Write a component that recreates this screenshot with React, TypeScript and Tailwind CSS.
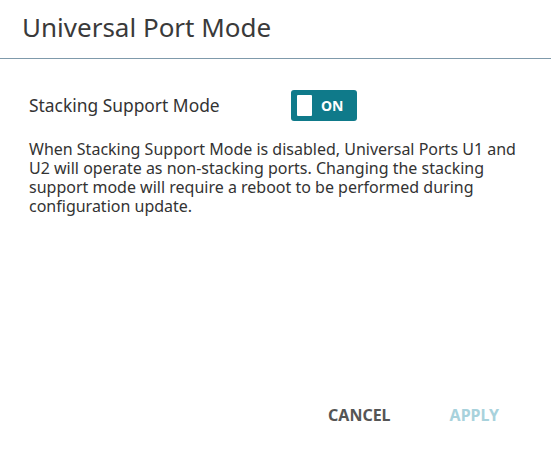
export default function App() {
  return (
    <div className="flex h-[455px] w-[551px] flex-col bg-white font-['Noto_Sans',sans-serif] text-[#333]">
      {/* Header */}
      <div className="flex h-[59px] items-center border-b border-[#7f9aab] px-[22px] pb-[4px]">
        <h1 className="text-[26px] font-normal text-[#3a3a3a]">Universal Port Mode</h1>
      </div>

      {/* Body */}
      <div className="flex-1 px-[29px] pt-[31px]">
        <div className="flex items-center">
          <span className="w-[262px] text-[17.4px]">Stacking Support Mode</span>
          <button className="flex h-[31px] w-[66px] items-center gap-[9px] rounded-[3px] bg-[#0f7a8a] px-[6px]">
            <span className="h-[21px] w-[15px] rounded-[1px] bg-white" />
            <span className="text-[14px] font-bold text-white">ON</span>
          </button>
        </div>
        <p className="mt-[19px] text-[16px] leading-[19px]">
          When Stacking Support Mode is disabled, Universal Ports U1 and U2 will operate as non-stacking ports. Changing the stacking support mode will require a reboot to be performed during configuration update.
        </p>
      </div>

      {/* Footer */}
      <div className="flex justify-end gap-[59px] pb-[28px] pr-[52px]">
        <button className="text-[16px] font-bold text-[#555]">CANCEL</button>
        <button className="text-[16px] font-bold text-[#a8d2dc]">APPLY</button>
      </div>
    </div>
  );
}
